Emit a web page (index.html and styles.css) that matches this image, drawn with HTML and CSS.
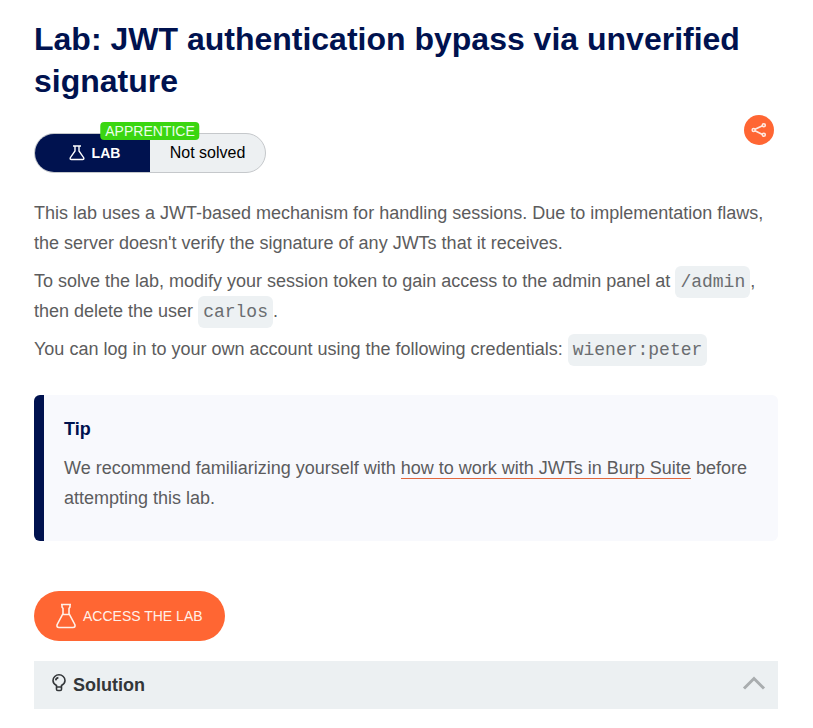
FILE: index.html
```html
<!DOCTYPE html>
<html lang="en">
<head>
<meta charset="utf-8">
<meta name="viewport" content="width=device-width, initial-scale=1">
<title>Lab: JWT authentication bypass via unverified signature</title>
<link rel="stylesheet" href="styles.css">
</head>
<body>
<main class="page">
  <h1 class="title">Lab: JWT authentication bypass via unverified signature</h1>
  <div class="meta">
    <div class="status">
      <span class="status-level">APPRENTICE</span>
      <span class="status-type">
        <svg class="icon-flask-small" viewBox="0 0 16 16" aria-hidden="true"><path d="M4 1h8M6 1v5L1.300 12.700Q.700 14.500 2.400 14.500H13.600Q15.300 14.500 14.700 12.700L10 6V1"/></svg>
        LAB
      </span>
      <span class="status-state">Not solved</span>
    </div>
    <button class="share" type="button" aria-label="Share">
      <svg viewBox="0 0 16 16" aria-hidden="true"><path d="M4 7.300 11.500 3.700M4 8.700l7.500 3.800"/><circle cx="2.700" cy="8" r="1.500"/><circle cx="12.800" cy="3.200" r="1.500"/><circle cx="12.800" cy="12.800" r="1.500"/></svg>
    </button>
  </div>
  <section class="description">
    <p>This lab uses a JWT-based mechanism for handling sessions. Due to implementation flaws, the server doesn't verify the signature of any JWTs that it receives.</p>
    <p>To solve the lab, modify your session token to gain access to the admin panel at <code>/admin</code>, then delete the user <code>carlos</code>.</p>
    <p>You can log in to your own account using the following credentials: <code>wiener:peter</code></p>
  </section>
  <aside class="tip">
    <h2 class="tip-title">Tip</h2>
    <p>We recommend familiarizing yourself with <a href="#burp">how to work with JWTs in Burp Suite</a> before attempting this lab.</p>
  </aside>
  <a class="access" href="#launch">
    <svg class="icon-flask" viewBox="0 0 20 26" aria-hidden="true"><path d="M5 1.500h10M6 1.500v2.500l1 1.500v5L1.200 21.500Q.300 24.500 3 24.500h14q2.700 0 1.800-3L13 10.500v-5L14 4V1.500M7 11.500h6"/></svg>
    ACCESS THE LAB
  </a>
  <button class="solution" type="button" aria-expanded="false">
    <svg class="icon-bulb" viewBox="0 0 14 18" aria-hidden="true"><path d="M4.500 13V11.500Q1 9.500 1 6.500a6 5.700 0 0 1 12 0Q13 9.500 9.500 11.500V13zM4.500 13v2.200q0 1.300 1.300 1.300h2.400q1.300 0 1.300-1.300V13M3.700 6.300Q4 4 6.400 3.600"/></svg>
    <span class="solution-label">Solution</span>
    <svg class="icon-chevron" viewBox="0 0 24 16" aria-hidden="true"><path d="M2 13.500 12 3.500l10 10"/></svg>
  </button>
</main>
</body>
</html>
```

FILE: styles.css
```css
* {
  box-sizing: border-box;
}

body {
  margin: 0;
  background: #fff;
  color: #5c5c5d;
  font: 18px/30px "Liberation Sans", Arial, sans-serif;
}

svg {
  flex: none;
  fill: none;
  stroke: currentColor;
}

p {
  margin: 0;
}

.page {
  padding: 18px 35px 18px 34px;
}

.title {
  margin: 0;
  color: #00124f;
  font-size: 32px;
  line-height: 42px;
}

.meta {
  display: flex;
  justify-content: space-between;
  align-items: flex-start;
  margin: 13px 4px 0 0;
}

.status {
  position: relative;
  display: grid;
  grid-template-columns: 1fr 1fr;
  width: 232px;
  height: 40px;
  margin-top: 18px;
  border: 1px solid #c5c8cb;
  border-radius: 20px;
  background: #edf0f2;
  line-height: 38px;
}

.status-type,
.status-state {
  display: flex;
  align-items: center;
  justify-content: center;
}

.status-type {
  gap: 7px;
  padding-left: 4px;
  border-radius: 19px 0 0 19px;
  background: #00124f;
  color: #fff;
  font-size: 14px;
  font-weight: bold;
}

.status-state {
  color: #000;
  font-size: 16px;
}

.status-level {
  position: absolute;
  top: -12px;
  left: 50%;
  transform: translateX(-50%);
  padding: 0 5px;
  border-radius: 4px;
  background: #3bd611;
  color: #eaffea;
  font-size: 14px;
  line-height: 18px;
}

.icon-flask-small {
  width: 16px;
  height: 16px;
  stroke-width: 1.4;
}

.share {
  display: grid;
  place-items: center;
  width: 30px;
  height: 30px;
  padding: 0;
  border: 0;
  border-radius: 50%;
  background: #ff6633;
  color: #ffe8df;
}

.share svg {
  width: 16px;
  height: 16px;
  stroke-width: 1.6;
}

.description {
  display: grid;
  gap: 8px;
  margin-top: 25px;
}

code {
  padding: 6px 5px;
  border-radius: 6px;
  background: #edf1f3;
  color: #6a6d70;
  font: 18px/24px "Liberation Mono", "Courier New", monospace;
}

.tip {
  margin-top: 31px;
  padding: 19px 20px 28px;
  border-left: 10px solid #00124f;
  border-radius: 6px;
  background: #f8f9fd;
}

.tip-title {
  margin: 0 0 9px;
  color: #00124f;
  font-size: 18px;
  line-height: 30px;
}

.tip a {
  border-bottom: 1px solid #e0673f;
  color: inherit;
  text-decoration: none;
}

.access {
  display: flex;
  align-items: center;
  gap: 7px;
  width: fit-content;
  height: 50px;
  margin-top: 50px;
  padding: 0 22px;
  border-radius: 25px;
  background: #ff6633;
  color: #fff0e8;
  font-size: 14px;
  text-decoration: none;
}

.icon-flask {
  width: 20px;
  height: 26px;
  stroke-width: 1.6;
}

.solution {
  display: flex;
  align-items: center;
  gap: 7px;
  width: 100%;
  height: 48px;
  margin-top: 20px;
  padding: 0 12px 0 18px;
  border: 0;
  background: #ecf0f2;
  color: #333639;
  font: bold 18px/30px "Liberation Sans", Arial, sans-serif;
  text-align: left;
}

.solution-label {
  flex: 1;
}

.icon-bulb {
  width: 14px;
  height: 18px;
  margin-bottom: 4px;
  stroke-width: 1.6;
}

.icon-chevron {
  width: 24px;
  height: 16px;
  margin-bottom: 4px;
  color: #a9adaf;
  stroke-width: 3;
}
```
